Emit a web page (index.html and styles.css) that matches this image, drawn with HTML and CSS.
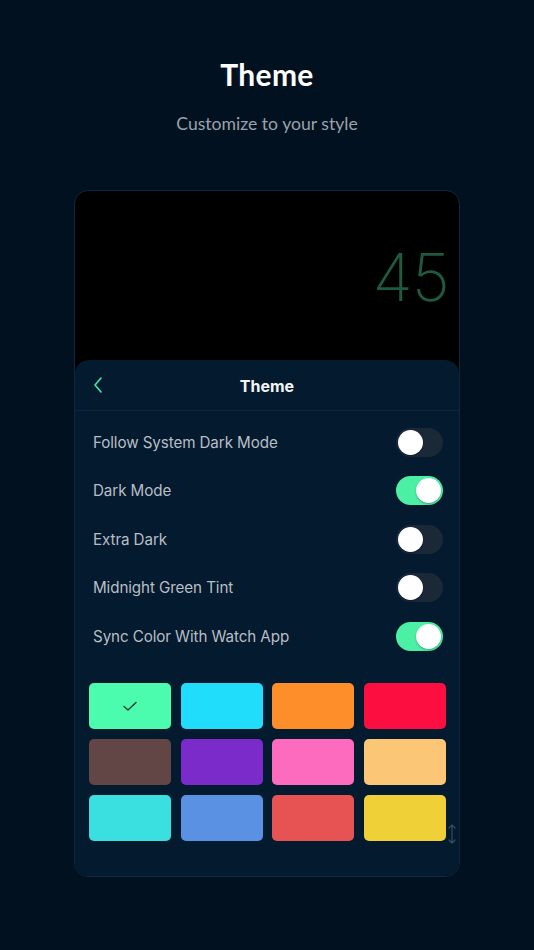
FILE: index.html
```html
<!DOCTYPE html>
<html>
<head>
<meta charset="utf-8">
<link rel="stylesheet" href="styles.css">
</head>
<body>
<div class="page">
  <h1 class="title">Theme</h1>
  <p class="subtitle">Customize to your style</p>
  <div class="device">
    <div class="preview">
      <span class="count">45</span>
    </div>
    <div class="sheet">
      <div class="sheet-head">
        <svg class="back" width="12" height="18" viewBox="0 0 12 18"><path d="M9 2 L3 9 L9 16" fill="none" stroke="#43e8a4" stroke-width="1.6" stroke-linecap="round" stroke-linejoin="round"/></svg>
        <span class="sheet-title">Theme</span>
      </div>
      <div class="rows">
        <div class="row"><span>Follow System Dark Mode</span><span class="toggle"></span></div>
        <div class="row"><span>Dark Mode</span><span class="toggle on"></span></div>
        <div class="row"><span>Extra Dark</span><span class="toggle"></span></div>
        <div class="row"><span>Midnight Green Tint</span><span class="toggle"></span></div>
        <div class="row"><span>Sync Color With Watch App</span><span class="toggle on"></span></div>
      </div>
      <div class="grid-wrap">
        <div class="grid">
          <div class="sw c1"><svg width="16" height="12" viewBox="0 0 16 12"><path d="M2 6.5 L6 10 L14 2.5" fill="none" stroke="#1d3b33" stroke-width="1.4" stroke-linecap="round" stroke-linejoin="round"/></svg></div>
          <div class="sw c2"></div>
          <div class="sw c3"></div>
          <div class="sw c4"></div>
          <div class="sw c5"></div>
          <div class="sw c6"></div>
          <div class="sw c7"></div>
          <div class="sw c8"></div>
          <div class="sw c9"></div>
          <div class="sw c10"></div>
          <div class="sw c11"></div>
          <div class="sw c12"></div>
        </div>
        <svg class="scroll" width="8" height="20" viewBox="0 0 8 20"><path d="M4 1 V19 M1 4 L4 1 L7 4 M1 16 L4 19 L7 16" fill="none" stroke="#3a4a5a" stroke-width="1.2" stroke-linecap="round" stroke-linejoin="round"/></svg>
      </div>
    </div>
  </div>
</div>
</body>
</html>
```

FILE: styles.css
```css
html, body {
  margin: 0;
  padding: 0;
  background: #02111f;
}
.page {
  width: 534px;
  height: 950px;
  background: #02111f;
  display: flex;
  flex-direction: column;
  align-items: center;
  font-family: "Lato", "Liberation Sans", sans-serif;
}
.title {
  margin: 57px 0 0;
  font-size: 30px;
  line-height: 34px;
  font-weight: 700;
  color: #ffffff;
  letter-spacing: 0.3px;
}
.subtitle {
  margin: 22px 0 0;
  font-size: 17.6px;
  line-height: 22px;
  color: #9aa2ab;
  font-weight: 400;
}
.device {
  margin-top: 55px;
  width: 384px;
  height: 685px;
  border: 1px solid #0e2841;
  border-radius: 14px;
  background: #000;
  overflow: hidden;
  display: flex;
  flex-direction: column;
}
.preview {
  height: 169px;
  display: flex;
  align-items: center;
  justify-content: flex-end;
  padding-right: 10px;
}
.count {
  font-family: "Inter", "Roboto", sans-serif;
  font-weight: 200;
  font-size: 66px;
  line-height: 66px;
  color: #1d5a40;
  margin-top: 2px;
  letter-spacing: -1px;
}
.sheet {
  flex: 1;
  background: #041a2e;
  border-radius: 14px 14px 0 0;
  display: flex;
  flex-direction: column;
  font-family: "Inter", "Roboto", sans-serif;
}
.sheet-head {
  height: 50px;
  border-bottom: 1px solid #0c263d;
  display: flex;
  align-items: center;
  justify-content: center;
  position: relative;
}
.back {
  position: absolute;
  left: 17px;
  top: 16px;
}
.sheet-title {
  color: #f2f4f6;
  font-size: 16px;
  font-weight: 700;
  margin-top: 2px;
}
.rows {
  padding: 7px 16px 0 18px;
  display: flex;
  flex-direction: column;
}
.row {
  height: 48.5px;
  display: flex;
  align-items: center;
  justify-content: space-between;
  color: #b8bec5;
  font-size: 15.2px;
  letter-spacing: -0.1px;
}
.toggle {
  width: 47px;
  height: 29px;
  border-radius: 15px;
  background: #1b2838;
  position: relative;
}
.toggle::after {
  content: "";
  position: absolute;
  left: 2px;
  top: 2px;
  width: 25px;
  height: 25px;
  border-radius: 50%;
  background: #ffffff;
  box-shadow: 0 1px 2px rgba(0,0,0,0.3);
}
.toggle.on {
  background: #4cf0a4;
}
.toggle.on::after {
  left: 20px;
}
.grid-wrap {
  margin-top: 22px;
  padding: 0 13px 0 14px;
  position: relative;
}
.grid {
  display: grid;
  grid-template-columns: repeat(4, 82px);
  grid-auto-rows: 46px;
  column-gap: 9.7px;
  row-gap: 10px;
}
.sw {
  border-radius: 5px;
  display: flex;
  align-items: center;
  justify-content: center;
}
.scroll {
  position: absolute;
  right: 3px;
  top: 141px;
}
.c1 { background: #4cfcae; }
.c2 { background: #20ddfc; }
.c3 { background: #fd8e2a; }
.c4 { background: #fc0f40; }
.c5 { background: #624545; }
.c6 { background: #7b2bca; }
.c7 { background: #fc6bbe; }
.c8 { background: #fcc677; }
.c9 { background: #3adfdf; }
.c10 { background: #5a91e2; }
.c11 { background: #e75353; }
.c12 { background: #efd036; }
```
